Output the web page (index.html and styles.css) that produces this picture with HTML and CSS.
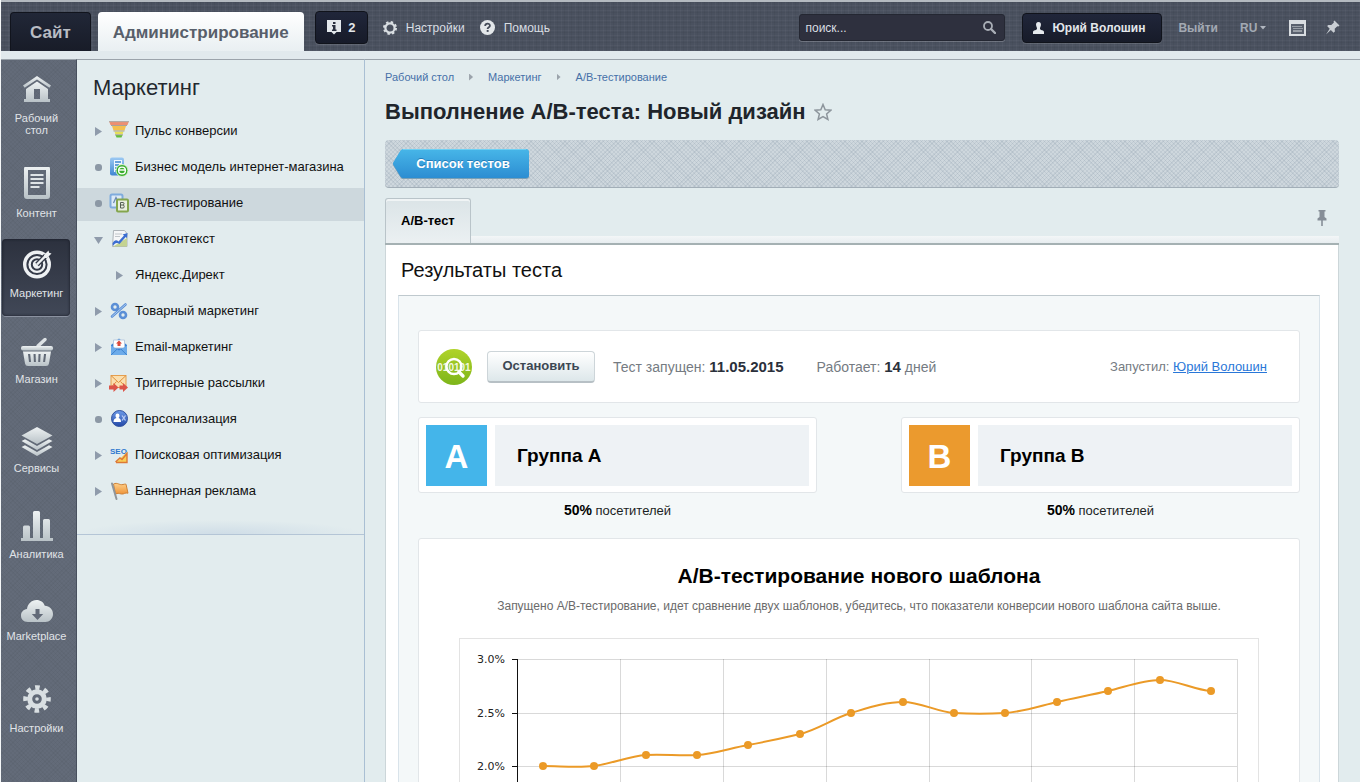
FILE: index.html
```html
<!DOCTYPE html>
<html lang="ru">
<head>
<meta charset="utf-8">
<title>Выполнение А/В-теста: Новый дизайн</title>
<link rel="stylesheet" href="styles.css">
</head>
<body>
<svg class="defs" width="0" height="0" aria-hidden="true">
  <defs>
    <linearGradient id="steel" x1="0" y1="0" x2="0" y2="1"><stop offset="0" stop-color="#eef2f3"/><stop offset="1" stop-color="#b9c2c7"/></linearGradient>
    <linearGradient id="blue" x1="0" y1="0" x2="0" y2="1"><stop offset="0" stop-color="#9cc9f3"/><stop offset="1" stop-color="#3f86d2"/></linearGradient>
    <linearGradient id="deep" x1="0" y1="0" x2="0" y2="1"><stop offset="0" stop-color="#6d9be8"/><stop offset="1" stop-color="#2348a8"/></linearGradient>
    <linearGradient id="green" x1="0" y1="0" x2="0" y2="1"><stop offset="0" stop-color="#b0d32a"/><stop offset="1" stop-color="#7db51a"/></linearGradient>
    <linearGradient id="orange" x1="0" y1="0" x2="0" y2="1"><stop offset="0" stop-color="#ffd08a"/><stop offset="1" stop-color="#ee943a"/></linearGradient>
  </defs>
</svg>

<header class="topbar">
  <nav class="tabs">
    <a class="tab tab-site" href="#">Сайт</a>
    <a class="tab tab-admin" href="#">Администрирование</a>
  </nav>
  <button class="dark-btn notify" type="button">
    <svg width="14" height="15" viewBox="0 0 14 15"><path d="M0 0h14v12H9.500L7 14.500 4.500 12H0z" fill="#e3e8ec"/><path d="M6 2h2.500v2H6zM5 5h3.500v4.500h1V11H5V9.500h1V6.500H5z" fill="#2a3040"/></svg>
    2
  </button>
  <a class="top-link" href="#">
    <svg width="14" height="14" viewBox="0 0 14 14"><circle cx="7" cy="7" r="4.600" fill="none" stroke="#d9dee2" stroke-width="2.200"/><circle cx="7" cy="7" r="6" fill="none" stroke="#d9dee2" stroke-width="2" stroke-dasharray="2.400 2.312"/></svg>
    Настройки
  </a>
  <a class="top-link" href="#">
    <svg width="15" height="15" viewBox="0 0 15 15"><circle cx="7.500" cy="7.500" r="7.500" fill="#e3e7ea"/><path d="M5.200 6C5 2.900 10 2.900 9.900 5.700c0 1.600-2.300 1.600-2.300 3.400" fill="none" stroke="#434a58" stroke-width="1.800"/><rect x="6.700" y="10" width="1.900" height="1.900" fill="#434a58"/></svg>
    Помощь
  </a>
  <form class="search" role="search">
    <input type="search" aria-label="Поиск" placeholder="поиск...">
    <button type="submit" aria-label="Найти"><svg width="13" height="13" viewBox="0 0 13 13"><circle cx="5" cy="5" r="4" fill="none" stroke="#a9aeb6" stroke-width="1.800"/><path d="M8 8l4 4" stroke="#a9aeb6" stroke-width="2.400" stroke-linecap="round"/></svg></button>
  </form>
  <button class="dark-btn user" type="button">
    <svg width="11" height="12" viewBox="0 0 11 12"><path d="M5.500 0C7.500 0 8.200 1.500 7.900 3.300 7.700 4.700 7 5.400 7 6.600c0 1 .7 1.300 2 1.700 1.500.4 2 .9 2 2.200V12H0v-1.500c0-1.300.5-1.800 2-2.200 1.300-.4 2-.7 2-1.700C4 5.400 3.300 4.700 3.100 3.300 2.800 1.500 3.500 0 5.500 0z" fill="#e6eaee"/></svg>
    Юрий Волошин
  </button>
  <a class="muted-link" href="#">Выйти</a>
  <span class="lang">
    <select aria-label="Язык"><option>RU</option></select>
    <svg width="6" height="4" viewBox="0 0 6 4"><path d="M0 0h6L3 3.500z" fill="#b0b6bf"/></svg>
  </span>
  <button class="icon-btn keys" type="button" aria-label="Горячие клавиши"><svg width="17" height="16" viewBox="0 0 17 16"><path d="M1 1h15v14H1z" fill="#59606d" stroke="#d9dde1" stroke-width="2"/><path d="M1 3h15" stroke="#d9dde1" stroke-width="2"/><path d="M3.500 6.500h10M4.500 8.500h9" stroke="#d9dde1" stroke-width="1" stroke-dasharray="1 1"/><path d="M4 11h9" stroke="#d9dde1" stroke-width="1"/></svg></button>
  <button class="icon-btn" type="button" aria-label="Закрепить"><svg width="14" height="15" viewBox="0 0 14 15"><path d="M8.500.5l5 5-1.200 1-1-.3-2.600 2.600.2 2.700-1.300 1.200L4.800 9.900 0 14.500l3.700-5.700L1.100 6l1.300-1.100 2.900.1 2.600-2.500-.4-1z" fill="#c9ced4"/></svg></button>
</header>

<div class="layout">
  <nav class="rail">
    <a class="rail-item" href="#">
      <svg width="30" height="36" viewBox="0 0 30 36"><g fill="url(#steel)"><path d="M15 0L1 9.500l1.600 2.200L15 3.500l12.400 8.200L29 9.500z"/><path fill-rule="evenodd" d="M15 5.500L4 13v10H2v3h26v-3h-2V13zM12 13h6v10h-6z"/></g></svg>
      Рабочий<br>стол
    </a>
    <a class="rail-item" href="#">
      <svg width="28" height="40" viewBox="0 1 28 40"><path fill-rule="evenodd" fill="url(#steel)" d="M4 0h20q3 0 3 3v27q0 3-3 3H4q-3 0-3-3V3q0-3 3-3zM5 4v25h18V4z"/><path d="M7.500 9h13M7.500 13h13M7.500 17h13M7.500 21h9" stroke="#dfe4e7" stroke-width="2"/></svg>
      Контент
    </a>
    <a class="rail-item active" href="#">
      <svg width="30" height="37" viewBox="0 0 30 37"><circle cx="15" cy="14.500" r="14" fill="#eef1f3"/><circle cx="15" cy="14.500" r="9.600" fill="none" stroke="#343a48" stroke-width="2"/><circle cx="15" cy="14.500" r="5.200" fill="none" stroke="#343a48" stroke-width="2"/><path d="M15 14.500L24 5.500" stroke="#343a48" stroke-width="5"/><path d="M15 14.500L25 4.500" stroke="#eef1f3" stroke-width="2.400"/><path d="M22 5l4.500-4.500.6 2.200 2.400.8L25 8h-3z" fill="#eef1f3"/></svg>
      Маркетинг
    </a>
    <a class="rail-item" href="#">
      <svg width="32" height="43" viewBox="0 -8 32 43"><path d="M17 8l7-6.500" stroke="#dde2e5" stroke-width="3.500" stroke-linecap="round"/><rect y="8" width="32" height="4.500" rx="2" fill="url(#steel)"/><path fill-rule="evenodd" fill="url(#steel)" d="M2 13.500h28l-2 12q-.4 2.500-3 2.500H7q-2.600 0-3-2.500zM7 16l1 8h2l-.8-8zm5.500 0l.4 8h2l-.3-8zm5 0l-.3 8h2l.4-8zm5.500 0l-.9 8h2l1-8z"/></svg>
      Магазин
    </a>
    <a class="rail-item" href="#">
      <svg width="32" height="46" viewBox="0 -11 32 46"><g fill="url(#steel)"><path d="M16 0l15.500 8.500L16 17 .5 8.500z"/><path d="M.5 14L4 12.200 16 19l12-6.800 3.500 1.800L16 23z"/><path d="M.5 20L4 18.200 16 25l12-6.800 3.500 1.800L16 29z"/></g></svg>
      Сервисы
    </a>
    <a class="rail-item" href="#">
      <svg width="32" height="43" viewBox="0 -6 32 43"><path fill="url(#steel)" d="M0 27h2V16q0-1.500 1.500-1.500h4Q9 14.500 9 16v11h3V1.500Q12 0 13.500 0h4Q19 0 19 1.500V27h3V9.500Q22 8 23.500 8h4Q29 8 29 9.500V27h3v3H0z"/></svg>
      Аналитика
    </a>
    <a class="rail-item" href="#">
      <svg width="34" height="39" viewBox="0 -9 34 39"><path fill="url(#steel)" d="M8 22C3 22 1 19 1 15.500S3.500 9.500 7 9c.5-5 4.500-9 9.500-9 4 0 7 2.200 8.300 5.700C29.500 6 33 9.300 33 14s-3.500 8-7.500 8z"/><path d="M15.500 9h4v5h3.700l-5.700 6-5.700-6h3.700z" fill="#626a78"/></svg>
      Marketplace
    </a>
    <a class="rail-item" href="#">
      <svg width="28" height="49" viewBox="0 -12 28 49"><g fill="none" stroke="#d9dfe2"><circle cx="14" cy="14" r="7.300" stroke-width="5"/><circle cx="14" cy="14" r="11.500" stroke-width="4.600" stroke-dasharray="4.500 4.532" stroke-dashoffset="2.200"/></g><circle cx="14" cy="14" r="1.800" fill="#d9dfe2"/></svg>
      Настройки
    </a>
  </nav>

  <aside class="menu">
    <h2>Маркетинг</h2>
    <ul>
      <li><a href="#"><i class="mark right"></i><svg width="20" height="20" viewBox="0 0 20 20"><path d="M0 0h20l-1.500 4h-17z" fill="#ee8f70"/><path d="M0 0h20v1.200H0z" fill="#b5aaa4"/><path d="M3 5h14l-1.500 4.500h-11z" fill="#f4c04f"/><path d="M5.500 10.500h9l-1 3h-7z" fill="#e6df58"/><path d="M6.500 14h7l-1 2.500h-5z" fill="#63bf3c"/><path d="M2 4.500h16M4.500 10h11M6 13.800h8" stroke="#a8a39b"/></svg>Пульс конверсии</a></li>
      <li><a href="#"><i class="mark dot"></i><svg width="20" height="20" viewBox="0 0 20 20"><rect x="1" y=".500" width="14" height="18" rx="2" fill="url(#blue)"/><path d="M5 3h8v12H5z" fill="#eef6ff"/><path d="M6 5h6M6 8h4M6 11h5M6 14h3" stroke="#3d86cf" stroke-width="1.500"/><circle cx="13" cy="13.500" r="6" fill="#38ad2c" stroke="#d8f3cf"/><circle cx="13" cy="13.500" r="3.400" fill="none" stroke="#fff" stroke-width="1.400"/><path d="M10 13h6" stroke="#fff" stroke-width="1.400"/></svg>Бизнес модель интернет-магазина</a></li>
      <li class="selected"><a href="#"><i class="mark dot"></i><svg width="20" height="20" viewBox="0 0 20 20"><rect x="1.500" y="1.500" width="12" height="13" rx="1.500" fill="#dce9f7" stroke="#7fabdd" stroke-width="2"/><path d="M4.500 10L7 4.500l2 4" fill="none" stroke="#6d8ab0" stroke-width="1.300"/><rect x="8" y="6.500" width="11" height="12" rx="1" fill="#e9efe0" stroke="#84a54d" stroke-width="2"/><path d="M11.500 9.500h2.500q1 0 1 1.200 0 1-1 1.300 1.200 0 1.200 1.500 0 1.500-1.200 1.500h-2.500zM11.500 12H14" fill="none" stroke="#565f55"/></svg>А/В-тестирование</a></li>
      <li><a href="#"><i class="mark down"></i><svg width="20" height="20" viewBox="0 0 20 20"><path d="M4.500 1.500h11l2.500 3v13H3.500z" fill="#f6f7f8" stroke="#aeb4b9"/><path d="M6 5h7M6 7.500h5" stroke="#c1c6ca"/><path d="M4 17.500h14V9z" fill="#c4d391"/><path d="M3.500 14.500c2-4 4-4 6-2L15 6.500l-1.500-1L18.500 4l-.5 5-1.300-1L10.500 15c-3-2-4.500-1-6.500 2z" fill="#3c6ed1"/></svg>Автоконтекст</a></li>
      <li class="child"><a href="#"><i class="mark right"></i>Яндекс.Директ</a></li>
      <li><a href="#"><i class="mark right"></i><svg width="20" height="20" viewBox="0 0 20 20"><g fill="none" stroke="#5b8fd6" stroke-width="2.600"><circle cx="6" cy="6" r="3"/><circle cx="14" cy="14" r="3"/><path d="M16.500 3.500L3 15.500" stroke-linecap="round"/></g><path d="M16.500 3.500L3 15.500" stroke="#a9c9f0" stroke-linecap="round"/></svg>Товарный маркетинг</a></li>
      <li><a href="#"><i class="mark right"></i><svg width="20" height="20" viewBox="0 0 20 20"><path d="M2 8l8-6.500L18 8v10H2z" fill="#3b82d4"/><path d="M4.500 3h11v8h-11z" fill="#fff" stroke="#b8cbe0"/><path d="M10 3.500l3 3h-1.500v2.500h-3V6.500H7z" fill="#dc4a3a"/><path d="M2 8.500l8 5 8-5V18H2z" fill="#6cabea"/><path d="M2 18l6-5.800M18 18l-6-5.800" stroke="#3f83cd"/></svg>Email-маркетинг</a></li>
      <li><a href="#"><i class="mark right"></i><svg width="20" height="20" viewBox="0 0 20 20"><rect x="2" y="2.500" width="15" height="12" fill="#fbdfae" stroke="#e59f4f"/><path d="M2 2.500l7.500 7 7.500-7M2 14.500l5.500-6M17 14.500l-5.500-6" fill="none" stroke="#e08f3c"/><path d="M0 12.500h4.500V10L9.500 14.500l-5 4.500v-2.500H0zM10.500 12.500H14V10l5 4.500-5 4.500v-2.500h-3.500z" fill="#dc5549"/></svg>Триггерные рассылки</a></li>
      <li><a href="#"><i class="mark dot"></i><svg width="20" height="20" viewBox="0 0 20 20"><circle cx="10.500" cy="9.500" r="8" fill="url(#deep)" stroke="#33539f"/><path d="M8.500 4.500q2 0 2 2.200 0 1.500-1 2.300 2.500.6 2.500 4H4.500q0-3.400 3-4-1-.8-1-2.300 0-2.200 2-2.200z" fill="#fff"/><path d="M13 6.500l3.500 5M16.500 6.500L13 11.500" stroke="#b9ccf5" stroke-width="1.300"/></svg>Персонализация</a></li>
      <li><a href="#"><i class="mark right"></i><svg width="20" height="20" viewBox="0 0 20 20"><text class="seo" x="1" y="9">SEO</text><path d="M7 17.500h11V7z" fill="#f9cf55"/><path d="M6.500 17l4.500-4 2 1.500L18 8.500V17.500H7" fill="none" stroke="#dd7836" stroke-width="1.400"/></svg>Поисковая оптимизация</a></li>
      <li><a href="#"><i class="mark right"></i><svg width="20" height="20" viewBox="0 0 20 20"><path d="M4.500 3c4-2 6 1.500 9.500.5 2-.6 3-.3 3-.3l2 9c-3-1-4 1.300-6.500.8-3-.6-3.500-1-6 0z" fill="url(#orange)" stroke="#cf8237"/><path d="M3 2.500L7.500 18" stroke="#8f959b" stroke-width="2" stroke-linecap="round"/></svg>Баннерная реклама</a></li>
    </ul>
  </aside>

  <main class="main">
    <nav class="crumbs">
      <a href="#">Рабочий стол</a><i></i><a href="#">Маркетинг</a><i></i><a href="#">А/В-тестирование</a>
    </nav>
    <h1>Выполнение А/В-теста: Новый дизайн
      <button class="icon-btn" type="button" aria-label="В избранное"><svg width="18" height="18" viewBox="0 0 18 18"><path d="M9 1.500l2.200 5.200 5.600.5-4.200 3.700 1.300 5.500L9 13.500l-4.900 2.900 1.300-5.500L1.200 7.200l5.600-.5z" fill="none" stroke="#8d959c" stroke-width="1.500"/></svg></button>
    </h1>
    <div class="toolbar">
      <a class="back-btn" href="#">
        <svg width="136" height="31" viewBox="0 0 136 31"><defs><linearGradient id="back" x1="0" y1="0" x2="0" y2="1"><stop offset="0" stop-color="#47b6e8"/><stop offset="1" stop-color="#2c8dd2"/></linearGradient></defs><path d="M10 1h123q3 0 3 3v23q0 3-3 3H10q-1.500 0-2.500-1.500L.5 17q-1-1.500 0-3L7.500 2.500Q8.500 1 10 1z" fill="#7a9fb5"/><path d="M10 0h123q3 0 3 3v23q0 3-3 3H10q-1.500 0-2.500-1.500L.5 16q-1-1.500 0-3L7.500 1.500Q8.500 0 10 0z" fill="url(#back)"/><path d="M10 .500h123" stroke="#6fd0f3"/></svg>
        <span>Список тестов</span>
      </a>
    </div>
    <div class="tabstrip">
      <button class="page-tab" type="button">А/В-тест</button>
      <button class="icon-btn strip-pin" type="button" aria-label="Закрепить панель"><svg width="10" height="16" viewBox="0 0 10 16"><path d="M1.500 0h7v1.500H7.500v5.500l2 1.500v2H5.800V16H4.200v-5.500H.5v-2L2.500 7V1.500h-1z" fill="#868e97"/></svg></button>
    </div>
    <section class="panel">
      <h2>Результаты теста</h2>
      <div class="results">
        <div class="card status">
          <svg width="36" height="36" viewBox="0 0 36 36"><circle cx="18" cy="18" r="18" fill="url(#green)"/><text class="bits" x="18" y="22" text-anchor="middle">010101</text><circle cx="18" cy="17.500" r="7.500" fill="none" stroke="#fff" stroke-width="2.400"/><path d="M23 23l4 4" stroke="#fff" stroke-width="3.400" stroke-linecap="round"/></svg>
          <button class="stop-btn" type="button">Остановить</button>
          <span class="started">Тест запущен: <b>11.05.2015</b></span>
          <span>Работает: <b>14</b> дней</span>
          <span class="owner">Запустил: <a href="#">Юрий Волошин</a></span>
        </div>
        <div class="groups">
          <div class="group">
            <div class="card group-card"><span class="letter a">A</span><span class="name">Группа А</span></div>
            <p><b>50%</b> посетителей</p>
          </div>
          <div class="group">
            <div class="card group-card"><span class="letter b">B</span><span class="name">Группа B</span></div>
            <p><b>50%</b> посетителей</p>
          </div>
        </div>
        <div class="card report">
          <h3>А/В-тестирование нового шаблона</h3>
          <p>Запущено А/В-тестирование, идет сравнение двух шаблонов, убедитесь, что показатели конверсии нового шаблона сайта выше.</p>
          <div class="chart">
            <svg viewBox="0 0 798 180" role="img" aria-label="Конверсия, %">
              <path d="M57 20.500h720M57 74.500h720M57 127.500h720M160.500 20v160M263.500 20v160M366.500 20v160M469.500 20v160M571.500 20v160M674.500 20v160M777.500 20v160" stroke="#000" stroke-opacity=".15" fill="none"/>
              <path d="M57.500 20v160M52 20.500h6M52 74.500h6M52 127.500h6" stroke="#111" fill="none"/>
              <g class="axis" text-anchor="end"><text x="45" y="24">3.0%</text><text x="45" y="78">2.5%</text><text x="45" y="131">2.0%</text></g>
              <path d="M83 127C100 127 117 129 134 127S169 117 186 116S220 117 237 116S271 109 288 106S323 99 340 95S374 79 391 74S425 63 443 63S477 73 494 74S528 75 545 74S580 67 597 63S631 56 648 52S683 41 700 41S734 51 751 52" fill="none" stroke="#eb9a27" stroke-width="2"/>
              <g fill="#eb9a27"><circle cx="83" cy="127" r="4"/><circle cx="134" cy="127" r="4"/><circle cx="186" cy="116" r="4"/><circle cx="237" cy="116" r="4"/><circle cx="288" cy="106" r="4"/><circle cx="340" cy="95" r="4"/><circle cx="391" cy="74" r="4"/><circle cx="443" cy="63" r="4"/><circle cx="494" cy="74" r="4"/><circle cx="545" cy="74" r="4"/><circle cx="597" cy="63" r="4"/><circle cx="648" cy="52" r="4"/><circle cx="700" cy="41" r="4"/><circle cx="751" cy="52" r="4"/></g>
            </svg>
          </div>
        </div>
      </div>
    </section>
  </main>
</div>
</body>
</html>
```
FILE: styles.css
```css
* { box-sizing: border-box; }

body {
  margin: 0;
  height: 100vh;
  overflow: hidden;
  display: flex;
  flex-direction: column;
  font: 13px/16px "Liberation Sans", Arial, sans-serif;
  color: #1b1f24;
  background: #e2ecee;
  border-left: 1px solid #f4f7f8;
}

h1, h2, h3, p, ul { margin: 0; padding: 0; }
ul { list-style: none; }
a { text-decoration: none; color: inherit; }
button { font: inherit; margin: 0; padding: 0; border: 0; background: none; color: inherit; cursor: pointer; }
svg { display: block; flex: none; }
.defs { position: absolute; }

/* Top bar */
.topbar {
  flex: none;
  display: flex;
  align-items: center;
  height: 51px;
  padding: 2px 20px 0 9px;
  border-top: 2px solid #b4bac0;
  color: #d9dee3;
  background:
    repeating-linear-gradient(90deg, rgba(255,255,255,.03) 0 1px, transparent 1px 3px, rgba(0,0,0,.04) 3px 4px, transparent 4px 7px),
    repeating-linear-gradient(0deg, rgba(255,255,255,.03) 0 1px, transparent 1px 3px, rgba(0,0,0,.04) 3px 4px, transparent 4px 5px),
    #4a515f;
}
.tabs { align-self: flex-end; display: flex; gap: 7px; }
.tab {
  height: 39px;
  padding: 0 15px;
  border-radius: 4px 4px 0 0;
  font-size: 17px;
  line-height: 41px;
  font-weight: bold;
}
.tab-site { padding: 0 19px; color: #b9bdc4; background: linear-gradient(#212737, #181c28); border: 1px solid #11141d; border-bottom: 0; line-height: 39px; }
.tab-admin { color: #585f6b; background: linear-gradient(#fff, #e9eff2); }

.dark-btn {
  display: flex;
  align-items: center;
  justify-content: center;
  height: 33px;
  border: 1px solid #10131b;
  border-radius: 4px;
  background: linear-gradient(#20263a, #171b29);
  box-shadow: 0 1px 0 rgba(255,255,255,.12);
  font-weight: bold;
  color: #e3e7eb;
}
.notify { width: 53px; gap: 7px; margin-left: 11px; }
.top-link { display: flex; align-items: center; gap: 9px; margin-left: 15px; font-size: 12px; }

.search {
  display: flex;
  align-items: center;
  width: 206px;
  height: 27px;
  margin-left: auto;
  padding: 0 8px 0 5px;
  border: 1px solid #242732;
  border-radius: 3px;
  background: #2e303e;
  box-shadow: 0 1px 0 rgba(255,255,255,.2);
}
.search input { flex: 1; min-width: 0; padding: 0; border: 0; outline: 0; background: none; font: inherit; font-size: 12px; color: #d9dee3; }
.search input::placeholder { color: #d9dee3; opacity: 1; }
.user { width: 140px; height: 30px; gap: 8px; margin-left: 17px; padding-right: 6px; font-size: 12px; }
.muted-link, .lang { font-size: 12px; font-weight: bold; color: #a3a9b3; }
.muted-link { margin-left: 16px; }
.lang { display: flex; align-items: center; gap: 2px; margin-left: 22px; }
.lang select { appearance: none; padding: 0; border: 0; background: none; font: inherit; color: inherit; }
.keys { margin: 0 20px 0 23px; }

/* Page columns */
.layout {
  flex: 1;
  min-height: 0;
  overflow: hidden;
  display: flex;
  border-top: 8px solid #e1e9ed;
}
.rail, .menu, .main { border-top: 1px solid #9ba3ab; }

.rail {
  flex: none;
  width: 76px;
  display: flex;
  flex-direction: column;
  gap: 3px;
  padding: 5px 6px 0 1px;
  color: #e0e4e8;
  border-right: 1px solid #48505e;
  background:
    repeating-linear-gradient(45deg, rgba(0,0,0,.03) 0 1px, transparent 1px 3px),
    repeating-linear-gradient(-45deg, rgba(0,0,0,.03) 0 1px, transparent 1px 3px),
    #636b79;
}
.rail-item {
  flex: none;
  padding: 11px 0 17px 1px;
  border-radius: 4px;
  font-size: 11px;
  line-height: 12px;
  text-align: center;
  white-space: nowrap;
}
.rail-item svg { margin: 0 auto; }
.rail-item.active { background: linear-gradient(#2c313e, #414857); box-shadow: inset 0 0 3px #151922, 0 1px 0 #8b92a0; }

.menu { flex: none; width: 288px; border-right: 1px solid #a9bfd3; }
.menu h2 { padding: 15px 16px 0; font-size: 22px; line-height: 26px; font-weight: normal; color: #23282e; }
.menu ul {
  display: flex;
  flex-direction: column;
  gap: 3px;
  padding: 15px 0 25px;
  border-bottom: 1px solid #b4c5d6;
  background: radial-gradient(50% 14px at 50% 100%, #cfdde7, transparent);
}
.menu li a { display: flex; align-items: center; height: 33px; padding: 0 0 3px 15px; color: #111; }
.menu li.selected { background: #cdd8dd; }
.menu li svg { margin: 0 6px; }
.menu li.child a { padding-left: 36px; }
.menu li.child .mark { margin-right: 11px; }
.mark { flex: none; width: 11px; height: 10px; }
.mark::before { content: ""; display: block; }
.mark.right::before { width: 7px; height: 9px; margin: 1px 0 0 3px; background: #8f9bab; clip-path: polygon(0 0, 100% 50%, 0 100%); }
.mark.down::before { width: 9px; height: 7px; margin: 3px 0 0 2px; background: #8f9bab; clip-path: polygon(0 0, 100% 0, 50% 100%); }
.mark.dot::before { width: 7px; height: 7px; margin: 2px 0 0 3px; border-radius: 3px; background: #8c98a5; }
.seo { font: bold 8px "Liberation Sans", sans-serif; fill: #2f78cf; }

/* Main column */
.main { flex: 1; min-width: 0; padding: 9px 21px 0 20px; }
.crumbs { display: flex; align-items: center; font-size: 11px; line-height: 16px; color: #4670a8; }
.crumbs i { width: 4px; height: 7px; margin: 0 15px; background: #9ba3ab; clip-path: polygon(0 0, 100% 50%, 0 100%); }
.main h1 { display: flex; align-items: center; gap: 8px; margin-top: 14px; font-size: 22px; line-height: 26px; color: #20252b; }

.toolbar {
  height: 48px;
  margin-top: 15px;
  padding: 9px 8px 0;
  border-radius: 4px;
  border-bottom: 1px solid #a2aeb7;
  background:
    repeating-linear-gradient(45deg, rgba(110,130,150,.14) 0 1px, transparent 1px 3px),
    repeating-linear-gradient(-45deg, rgba(110,130,150,.14) 0 1px, transparent 1px 3px),
    #ced7dd;
}
.back-btn { display: grid; width: 136px; height: 31px; color: #fff; font-weight: bold; }
.back-btn svg, .back-btn span { grid-area: 1 / 1; }
.back-btn span { z-index: 1; text-align: center; line-height: 29px; padding-left: 4px; text-shadow: 0 -1px 0 rgba(0,60,120,.4); }

.tabstrip { display: flex; justify-content: space-between; align-items: center; margin-top: 10px; height: 47px; border-bottom: 2px solid #a5b1b3; background: linear-gradient(#f3f6f7, #e7edf0) 0 100% / 100% 7px no-repeat; }
.page-tab {
  align-self: stretch;
  padding: 0 15px;
  border: 1px solid #b9c4c9;
  border-bottom: 0;
  border-radius: 3px 3px 0 0;
  background: linear-gradient(#dbe4e7, #ebf0f2);
  box-shadow: inset 0 2px 0 #f0f4f5;
  font-weight: bold;
  color: #000;
}
.strip-pin { margin: 0 12px 6px 0; }

.panel { border: 1px solid #ccd6d9; border-top: 0; background: #fff; padding: 12px 18px 0 12px; }
.panel h2 { padding-left: 3px; font-size: 20px; line-height: 26px; font-weight: normal; color: #111; }
.results { margin-top: 12px; padding: 34px 19px 20px; background: #f4f8f9; border: 1px solid #d9e3ea; border-top-color: #bfc9ce; }
.card { background: #fff; border: 1px solid #e2e6e9; border-radius: 3px; }

.status { display: flex; align-items: center; height: 73px; padding: 0 32px 0 17px; font-size: 14px; color: #757b82; }
.status b { font-size: 15px; color: #2a303b; }
.stop-btn {
  width: 108px;
  height: 32px;
  margin: 0 18px 0 15px;
  border: 1px solid #cdd5d9;
  border-bottom: 2px solid #b7c0c5;
  border-radius: 4px;
  background: linear-gradient(#fff, #dde7ea);
  font-size: 13px;
  font-weight: bold;
  color: #3c4753;
}
.started { margin-right: 33px; }
.owner { margin-left: auto; font-size: 13px; }
.owner a { color: #2977d8; text-decoration: underline; }

.groups { display: flex; justify-content: space-between; gap: 84px; margin-top: 14px; }
.group { flex: 1; text-align: center; }
.group-card { display: flex; gap: 8px; padding: 7px 7px 6px; text-align: left; }
.letter { width: 61px; height: 61px; color: #fff; font-size: 33px; line-height: 63px; font-weight: bold; text-align: center; }
.letter.a { background: #44b5ea; }
.letter.b { background: #eb9a2e; }
.name { flex: 1; padding-left: 22px; background: #eef2f5; font-size: 19px; line-height: 61px; font-weight: bold; color: #000; }
.group p { margin: 9px 0 19px; line-height: 17px; }
.group b { font-size: 14px; color: #000; }

.report { padding: 24px 40px 40px; text-align: center; }
.report h3 { font-size: 21px; line-height: 26px; color: #000; }
.report p { margin-top: 9px; font-size: 12px; line-height: 16px; color: #6a6a6a; }
.chart { margin-top: 24px; border: 1px solid #e3e3e3; }
.chart svg { width: 100%; }
.axis { font: 11px "DejaVu Sans", sans-serif; fill: #222; }
.bits { font: bold 10px "Liberation Sans", sans-serif; fill: #f2f8e0; }
```
